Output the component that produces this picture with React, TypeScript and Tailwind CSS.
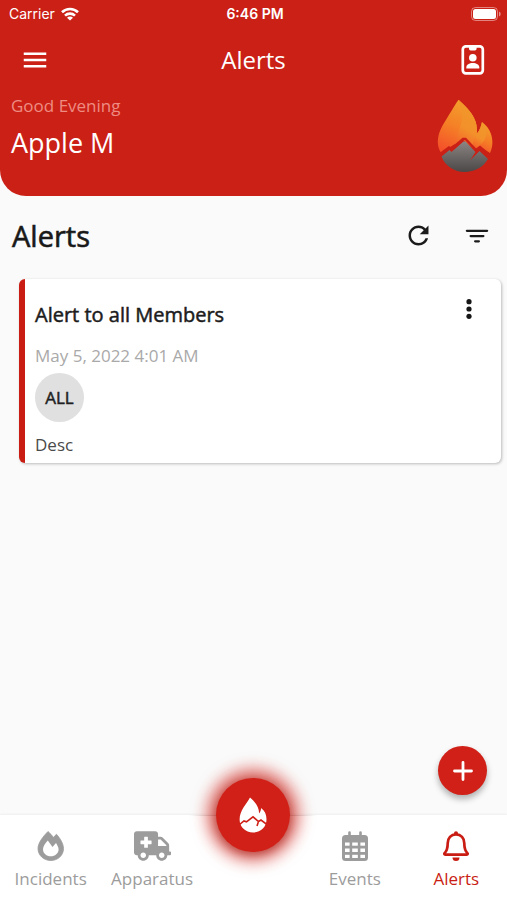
import { FaAmbulance } from "react-icons/fa";
import { IoMdRefresh } from "react-icons/io";
import { IoFilter } from "react-icons/io5";
import { MdMenu } from "react-icons/md";

interface AlertItem {
  id: number;
  title: string;
  date: string;
  audience: string;
  description: string;
}

const ALERTS: AlertItem[] = [
  {
    id: 1,
    title: "Alert to all Members",
    date: "May 5, 2022 4:01 AM",
    audience: "ALL",
    description: "Desc",
  },
];

function WifiIcon() {
  return (
    <svg viewBox="0 0 18 14" className="h-[14px] w-[18px]" fill="none" stroke="white" strokeWidth="2.6" aria-hidden="true">
      <path d="M1 5.2C5.4.9 12.6.9 17 5.2" />
      <path d="M4 8.6c2.8-2.7 7.2-2.7 10 0" />
      <path d="M9 13.6 6 10.7c1.6-1.5 4.4-1.5 6 0z" fill="white" stroke="none" />
    </svg>
  );
}

function BatteryIcon() {
  return (
    <svg viewBox="0 0 30 14" className="h-[14px] w-[30px]" aria-hidden="true">
      <rect x="0.5" y="0.5" width="26" height="13" rx="4" fill="none" stroke="white" strokeOpacity="0.45" />
      <rect x="2" y="2" width="23" height="10" rx="2.5" fill="white" />
      <path d="M28 4.5c2.2.8 2.2 4.2 0 5z" fill="white" fillOpacity="0.5" />
    </svg>
  );
}

function BadgeIcon() {
  return (
    <svg viewBox="0 0 24 30" className="h-[30px] w-6" fill="white" aria-hidden="true">
      <rect x="1.8" y="1.3" width="20" height="27" rx="3" fill="none" stroke="white" strokeWidth="2.7" />
      <path d="M8 2h7.6v1.8a1.7 1.7 0 0 1-1.7 1.7H9.7A1.7 1.7 0 0 1 8 3.800z" />
      <circle cx="11.8" cy="12.7" r="3.8" />
      <path d="M5.3 23.5v-1c0-3 3-4.6 6.500-4.600s6.500 1.600 6.500 4.600v1z" />
    </svg>
  );
}

function IncidentIcon() {
  return (
    <svg viewBox="0 0 28 30" className="h-[30px] w-7" aria-hidden="true">
      <path
        d="M11 .5C6 5.500 1 12 1 17.500 1 24.300 6.700 29.500 13.800 29.500S26.500 24.300 26.500 17.500c0-4.500-3.500-10.500-7-14.200-1.200 1-2.200 2-3 3.200C14.900 4.300 13.100 2.300 11 .5z"
        fill="currentColor"
        stroke="currentColor"
        strokeWidth="0.8"
        strokeLinejoin="round"
      />
      <path
        d="M10.800 9.500C8 12.800 6 15.500 6 18.200c0 4.300 3.500 7 7.800 7s7.800-2.700 7.800-7c0-1.900-1.400-4.200-2.600-6.200L15.500 16z"
        fill="white"
      />
    </svg>
  );
}

function CalendarIcon() {
  return (
    <svg viewBox="0 0 26 30" className="h-[30px] w-[26px]" aria-hidden="true">
      <path
        d="M7.500 1.500v5M18.500 1.500v5"
        stroke="currentColor"
        strokeWidth="2.6"
        strokeLinecap="round"
      />
      <rect x="0" y="4" width="26" height="26" rx="3.500" fill="currentColor" />
      <g fill="white">
        <rect x="3" y="11.5" width="4.600" height="3.200" />
        <rect x="10.200" y="11.5" width="5.600" height="3.200" />
        <rect x="18.400" y="11.5" width="4.600" height="3.200" />
        <rect x="3" y="17.500" width="4.600" height="3.500" />
        <rect x="10.200" y="17.500" width="5.600" height="3.500" />
        <rect x="18.400" y="17.500" width="4.600" height="3.500" />
        <rect x="3" y="23.800" width="4.600" height="3.200" />
        <rect x="10.200" y="23.800" width="5.600" height="3.200" />
        <rect x="18.400" y="23.800" width="4.600" height="3.200" />
      </g>
    </svg>
  );
}

function BellIcon() {
  return (
    <svg viewBox="0 0 26 30" className="h-[30px] w-[26px]" fill="currentColor" aria-hidden="true">
      <circle cx="13" cy="2.200" r="2" />
      <path
        d="M13 3.400c-5 0-8.300 3.700-8.300 8.800 0 5-.8 7.600-3.100 9.900-.6.600-.3 1.500.6 1.500h21.600c.9 0 1.200-.9.600-1.500-2.300-2.300-3.100-4.900-3.100-9.900 0-5.100-3.300-8.800-8.300-8.800z"
        fill="none"
        stroke="currentColor"
        strokeWidth="2.7"
        strokeLinejoin="round"
      />
      <path d="M9.500 26.400h7a3.500 3.500 0 0 1-7 0z" />
    </svg>
  );
}

function FlameLogo() {
  return (
    <svg viewBox="0 0 56 74" className="h-[74px] w-14" role="img" aria-label="Flame and mountain">
      <defs>
        <linearGradient id="flame" x1="0.6" y1="0" x2="0.25" y2="1">
          <stop offset="0" stopColor="#f3a02c" />
          <stop offset="0.5" stopColor="#f58026" />
          <stop offset="1" stopColor="#f4502a" />
        </linearGradient>
        <linearGradient id="flameLight" x1="0.7" y1="0" x2="0.4" y2="1">
          <stop offset="0" stopColor="#f09a2a" />
          <stop offset="0.6" stopColor="#f3902a" />
          <stop offset="1" stopColor="#f4622a" />
        </linearGradient>
        <linearGradient id="rock" x1="0.5" y1="0" x2="0.5" y2="1">
          <stop offset="0" stopColor="#8b8583" />
          <stop offset="1" stopColor="#4b4847" />
        </linearGradient>
      </defs>
      <path d="M21.500.8C18.500 5 14 13 9.500 20 5 27 1 34 .8 43c0 4 1.200 8 3.400 11l8.300-5.500L25.500 40l12 10.500 4-3L40 34c0-6-.5-10-2.500-14C34 12 27 6 21.500.8z" fill="url(#flame)" />
      <path d="M21.500.8c.8 5 3 10 3.500 16 .5 8-5 18-7.500 29l8-5.800 12 10.500 4-3L40 34c0-6-.5-10-2.500-14C34 12 27 6 21.500.8z" fill="url(#flameLight)" />
      <path d="M45 23c-1 4-2 8-5 11.500-2 3-3.500 7.500-4 14l1.500 2 5-3 10.500 6.500c3-6 3-13 1-19C52.500 30 49 26 45 23z" fill="url(#flame)" />
      <path d="M45 23c-1 4-2 8-5 11.500-2 3-3.500 7.500-4 14l1.500 2C45 46 52 38 48.500 30c-1.500-3-2.500-5-3.500-7z" fill="url(#flameLight)" />
      <path d="M4.500 57.500 12.500 51l2 2L26.500 42.500h2L38.500 53 33 61.500l9.500-9.500 8.500 8C46.500 68 37.500 73 27.500 73S8 67 4.500 57.500z" fill="url(#rock)" />
      <path d="M2.500 55.500 12 48.500l2.500 1.500L26 40h2.500l10.500 11 4-3 10.500 9" fill="none" stroke="#cb2016" strokeWidth="2.400" />
    </svg>
  );
}

function FlameMark() {
  return (
    <svg viewBox="0 0 28 36" className="h-9 w-7" fill="white" aria-hidden="true">
      <path d="M11 .5C7.500 7 .6 13.500.6 22.500.6 30 6.500 35.500 14 35.500S27.500 30 27.500 22.500c0-5-1.700-9-5.500-11.500.2 2-.6 4-1.900 5.500C20.100 9.500 16 5 11 .5z" />
      <path d="M0 28 5 24l2.500.8L14 19.800l5.500 4.700 2.500-1.500 6 4.500M19.500 24.500 18 29" fill="none" stroke="#cf2017" strokeWidth="1.600" />
    </svg>
  );
}

function AlertCard({ alert }: { alert: AlertItem }) {
  return (
    <li className="rounded-md border-l-[6px] border-[#c91d14] bg-white px-[10px] pt-4 pb-[6px] shadow-[1px_1px_3px_rgba(0,0,0,0.25)]">
      <div className="flex items-start justify-between">
        <h3 className="pt-[6px] text-[20px] leading-7 text-[#1c1c1c] [-webkit-text-stroke:0.5px_#1c1c1c]">
          {alert.title}
        </h3>
        <button type="button" aria-label="Alert options" className="flex h-7 w-11 items-center justify-center">
          <svg viewBox="0 0 6 20" className="h-5 w-[6px]" fill="#161616" aria-hidden="true">
            <circle cx="3" cy="2.700" r="2.600" />
            <circle cx="3" cy="10" r="2.600" />
            <circle cx="3" cy="17.300" r="2.600" />
          </svg>
        </button>
      </div>
      <p className="mt-[15px] text-[17px] leading-6 text-[#a9a9a9]">{alert.date}</p>
      <div className="mt-[5px] flex size-[49px] items-center justify-center rounded-full bg-[#e0e0e0] text-[17px] text-[#1f1f1f] [-webkit-text-stroke:0.5px_#1f1f1f]">
        {alert.audience}
      </div>
      <p className="mt-[11px] text-[17px] leading-6 text-[#4a4a4a]">{alert.description}</p>
    </li>
  );
}

export default function App() {
  return (
    <div className="flex min-h-screen flex-col bg-[#fafafa] font-['Open_Sans',sans-serif]">
      <header className="rounded-b-[26px] bg-[#cb2016] text-white">
        {/* Status bar */}
        <div className="grid h-[27px] grid-cols-3 items-center pr-[6px] pl-[9px] font-['Inter',sans-serif] text-[14px]">
          <div className="flex items-center gap-[6px]">
            <span>Carrier</span>
            <WifiIcon />
          </div>
          <span className="text-center font-semibold">6:46 PM</span>
          <div className="flex justify-end">
            <BatteryIcon />
          </div>
        </div>

        {/* App bar */}
        <div className="grid h-[66px] grid-cols-3 items-center px-5">
          <button type="button" aria-label="Open menu" className="w-8">
            <MdMenu className="size-[30px]" />
          </button>
          <h1 className="text-center text-2xl">Alerts</h1>
          <button type="button" aria-label="Profile" className="justify-self-end pr-[2px]">
            <BadgeIcon />
          </button>
        </div>

        {/* Greeting */}
        <div className="flex h-[103px] justify-between pr-[14px] pl-[11px]">
          <div>
            <p className="pt-px text-[17px] leading-6 text-[#ee8c82]">Good Evening</p>
            <p className="mt-[7px] text-[27px] leading-9">Apple M</p>
          </div>
          <div className="pt-[6px]">
            <FlameLogo />
          </div>
        </div>
      </header>

      <main className="flex flex-1 flex-col">
        <div className="flex h-[83px] items-center justify-between pr-[18px] pb-1 pl-3">
          <h2 className="text-[29px] text-[#191919] [-webkit-text-stroke:0.6px_#191919]">Alerts</h2>
          <div className="flex items-center gap-8 text-[#1b1b1b]">
            <button type="button" aria-label="Refresh">
              <IoMdRefresh className="size-[29px]" />
            </button>
            <button type="button" aria-label="Filter">
              <IoFilter className="size-6" />
            </button>
          </div>
        </div>

        <ul className="flex flex-col gap-4 pr-[6px] pl-[19px]">
          {ALERTS.map((alert) => (
            <AlertCard key={alert.id} alert={alert} />
          ))}
        </ul>

        <button
          type="button"
          aria-label="Add alert"
          className="mt-auto mr-5 mb-5 flex size-[49px] items-center justify-center self-end rounded-full bg-[#d02017] text-white shadow-[0_4px_6px_rgba(0,0,0,0.3)]"
        >
          <svg viewBox="0 0 20 20" className="size-5" stroke="white" strokeWidth="2.8" strokeLinecap="round" aria-hidden="true">
            <path d="M10 1.500v17M1.500 10h17" />
          </svg>
        </button>
      </main>

      <nav className="grid h-[85px] grid-cols-5 bg-white text-[17px] text-[#9c9c9c] shadow-[0_-1px_2px_rgba(0,0,0,0.05)]">
        <a href="#incidents" className="flex flex-col items-center gap-[6px] pt-4">
          <IncidentIcon />
          <span className="leading-6">Incidents</span>
        </a>
        <a href="#apparatus" className="flex flex-col items-center gap-[6px] pt-4">
          <FaAmbulance className="h-[30px] w-[37px]" />
          <span className="leading-6">Apparatus</span>
        </a>
        <div className="relative">
          <div className="absolute top-0 left-1/2 h-px w-32 -translate-x-1/2 bg-gradient-to-r from-transparent via-[#8c8c8c] to-transparent" />
          <button
            type="button"
            aria-label="Home"
            className="absolute -top-[37px] left-1/2 flex size-[74px] -translate-x-1/2 items-center justify-center rounded-full bg-[#d02017] shadow-[0_0_15px_9px_rgba(208,32,23,0.65),0_2px_8px_rgba(60,0,0,0.5)]"
          >
            <FlameMark />
          </button>
        </div>
        <a href="#events" className="flex flex-col items-center gap-[6px] pt-4">
          <CalendarIcon />
          <span className="leading-6">Events</span>
        </a>
        <a href="#alerts" aria-current="page" className="flex flex-col items-center gap-[6px] pt-4 text-[#c91d14]">
          <BellIcon />
          <span className="leading-6">Alerts</span>
        </a>
      </nav>
    </div>
  );
}
